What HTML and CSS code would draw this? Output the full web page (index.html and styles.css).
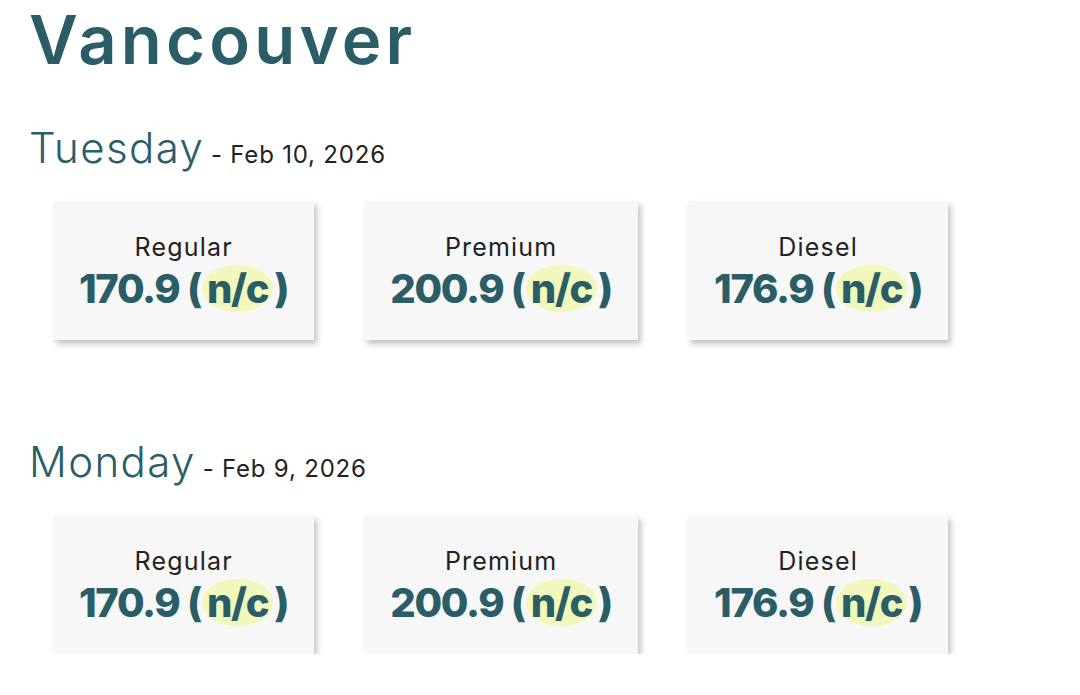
FILE: index.html
```html
<!DOCTYPE html>
<html lang="en">
<head>
<meta charset="utf-8">
<title>Vancouver Gas Prices</title>
<link rel="stylesheet" href="styles.css">
</head>
<body>
<main class="page">
  <h1 class="city">Vancouver</h1>

  <section class="day">
    <h2 class="day-head"><span class="day-name">Tuesday</span> <span class="day-date">- Feb 10, 2026</span></h2>
    <div class="cards">
      <div class="card">
        <div class="label">Regular</div>
        <div class="price">170.9 (<span class="nc">n/c</span>)</div>
      </div>
      <div class="card">
        <div class="label">Premium</div>
        <div class="price">200.9 (<span class="nc">n/c</span>)</div>
      </div>
      <div class="card">
        <div class="label">Diesel</div>
        <div class="price">176.9 (<span class="nc">n/c</span>)</div>
      </div>
    </div>
  </section>

  <section class="day">
    <h2 class="day-head"><span class="day-name">Monday</span> <span class="day-date">- Feb 9, 2026</span></h2>
    <div class="cards">
      <div class="card">
        <div class="label">Regular</div>
        <div class="price">170.9 (<span class="nc">n/c</span>)</div>
      </div>
      <div class="card">
        <div class="label">Premium</div>
        <div class="price">200.9 (<span class="nc">n/c</span>)</div>
      </div>
      <div class="card">
        <div class="label">Diesel</div>
        <div class="price">176.9 (<span class="nc">n/c</span>)</div>
      </div>
    </div>
  </section>
</main>
</body>
</html>
```

FILE: styles.css
```css
html, body {
  margin: 0;
  padding: 0;
  background: #ffffff;
}

body {
  font-family: "Inter", "Open Sans", "Liberation Sans", sans-serif;
  color: #222222;
}

.page {
  padding: 4px 0 0 29px;
}

.city {
  margin: 0;
  font-size: 67px;
  line-height: 72px;
  font-weight: 600;
  color: #2b5d67;
  letter-spacing: 4.2px;
}

.day {
  margin-top: 44px;
}

.day + .day {
  margin-top: 94px;
}

.day-head {
  margin: 0;
  font-weight: 300;
  line-height: 56px;
}

.day-name {
  font-size: 42px;
  color: #2b5d67;
  letter-spacing: 1.4px;
}

.day-date {
  font-size: 24px;
  font-weight: 400;
  color: #222222;
  letter-spacing: 0.8px;
}

.cards {
  display: flex;
  gap: 50px;
  padding-left: 24px;
  margin-top: 18px;
}

.card {
  background: #f7f7f7;
  box-shadow: 3px 4px 6px rgba(0, 0, 0, 0.24);
  padding: 31px 26px 29px;
  text-align: center;
  height: 79px;
}

.label {
  font-size: 25px;
  line-height: 30px;
  font-weight: 400;
  color: #222222;
  letter-spacing: 1.2px;
}

.price {
  margin-top: 3px;
  font-size: 40px;
  line-height: 46px;
  font-weight: 800;
  color: #2b5d67;
  white-space: nowrap;
  letter-spacing: -1.3px;
}

.nc {
  display: inline-block;
  background: #f2f7bb;
  border-radius: 50%;
  padding: 0 5px;
  margin: 0 1px;
  line-height: 47px;
}
```
